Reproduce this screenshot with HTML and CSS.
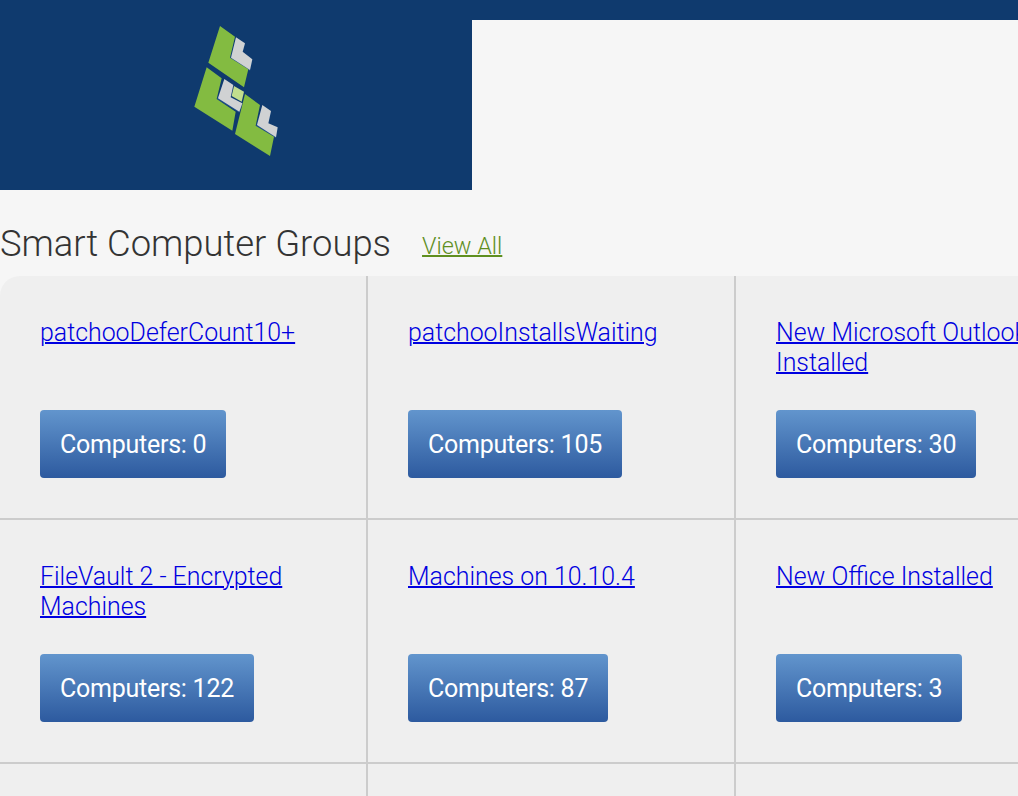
FILE: index.html
```html
<!DOCTYPE html>
<html lang="en">
<head>
<meta charset="utf-8">
<title>Smart Computer Groups</title>
<link rel="stylesheet" href="styles.css">
</head>
<body>
<header class="masthead">
  <div class="brand">
    <svg class="logo" viewBox="66 30 264 420" aria-hidden="true">
      <polygon class="shade" points="198,84 225,103 218,128 247,151 240,183 180,146"/>
      <polygon class="shade" points="163,210 190,228 182,265 217,283 208,308 141,268"/>
      <polygon class="shade" points="277,288 303,306 295,343 323,355 318,385 258,348"/>
      <polygon class="green" points="150,48 195,80 180,143 235,178 222,232 115,158"/>
      <polygon class="green" points="110,172 155,205 140,267 197,305 187,362 73,290"/>
      <polygon class="green" points="225,252 270,285 257,347 312,380 300,438 195,372"/>
      <polygon class="grey" points="198,82 225,100 218,125 247,148 240,180 183,143"/>
      <polygon class="grey" points="163,207 190,225 182,262 217,280 208,305 144,265"/>
      <polygon class="grey" points="277,285 303,303 295,340 323,352 318,382 261,345"/>
      <polygon class="lime" points="192,228 222,245 215,275 185,258"/>
    </svg>
  </div>
</header>
<main>
  <div class="section-head">
    <h1 class="section-title">Smart Computer Groups</h1>
    <a class="view-all" href="#">View All</a>
  </div>
  <div class="groups">
    <article class="group">
      <a class="group-link" href="#">patchooDeferCount10+</a>
      <a class="count" href="#">Computers: 0</a>
    </article>
    <article class="group">
      <a class="group-link" href="#">patchooInstallsWaiting</a>
      <a class="count" href="#">Computers: 105</a>
    </article>
    <article class="group">
      <a class="group-link" href="#">New Microsoft Outlook Installed</a>
      <a class="count" href="#">Computers: 30</a>
    </article>
    <article class="group">
      <a class="group-link" href="#">FileVault 2 - Encrypted Machines</a>
      <a class="count" href="#">Computers: 122</a>
    </article>
    <article class="group">
      <a class="group-link" href="#">Machines on 10.10.4</a>
      <a class="count" href="#">Computers: 87</a>
    </article>
    <article class="group">
      <a class="group-link" href="#">New Office Installed</a>
      <a class="count" href="#">Computers: 3</a>
    </article>
    <article class="group"></article>
    <article class="group"></article>
    <article class="group"></article>
  </div>
</main>
</body>
</html>
```
FILE: styles.css
```css
html, body {
  margin: 0;
  height: 100%;
  overflow: hidden;
}
body {
  background: #f6f6f6;
  font-family: Roboto, "Liberation Sans", sans-serif;
  color: #333;
}
.masthead {
  background: linear-gradient(#0f3a6e 20px, transparent 20px);
}
.brand {
  width: 472px;
  height: 190px;
  box-sizing: border-box;
  padding-top: 20px;
  background: #0f3a6e;
  display: flex;
  justify-content: center;
  align-items: flex-start;
}
.logo {
  width: 88px;
  height: 140px;
  filter: blur(0.4px);
}
.green { fill: #83bb41; }
.grey { fill: #d0d2d3; }
.shade { fill: #1f4f8a; }
.lime { fill: #c2de8e; }
.section-head {
  height: 86px;
  display: flex;
  align-items: baseline;
  gap: 31px;
  padding-top: 32px;
  box-sizing: border-box;
}
.section-title {
  margin: 0;
  font-size: 36.4px;
  font-weight: 300;
  line-height: 44px;
}
.view-all {
  position: relative;
  top: -2px;
  font-size: 23.4px;
  font-weight: 300;
  color: #5f8f1f;
  text-decoration-thickness: 2px;
}
.groups {
  display: grid;
  grid-template-columns: repeat(3, 368px);
  grid-auto-rows: 244px;
  width: 1104px;
  background: #efefef;
  border-top-left-radius: 20px;
  overflow: hidden;
}
.group {
  box-sizing: border-box;
  padding: 42px 40px 40px;
  border-right: 2px solid #ccc;
  border-bottom: 2px solid #ccc;
  display: flex;
  flex-direction: column;
  align-items: flex-start;
}
.group-link {
  display: block;
  height: 60px;
  margin-bottom: 32px;
  font-size: 24.9px;
  font-weight: 300;
  line-height: 30px;
  color: #0000e0;
  text-decoration-thickness: 2px;
}
.count {
  display: block;
  height: 68px;
  padding: 0 20px;
  border-radius: 4px;
  background: linear-gradient(#6295cd, #2d5a9f);
  color: #fff;
  font-size: 25px;
  line-height: 70px;
  letter-spacing: -0.25px;
  text-decoration: none;
}
```
